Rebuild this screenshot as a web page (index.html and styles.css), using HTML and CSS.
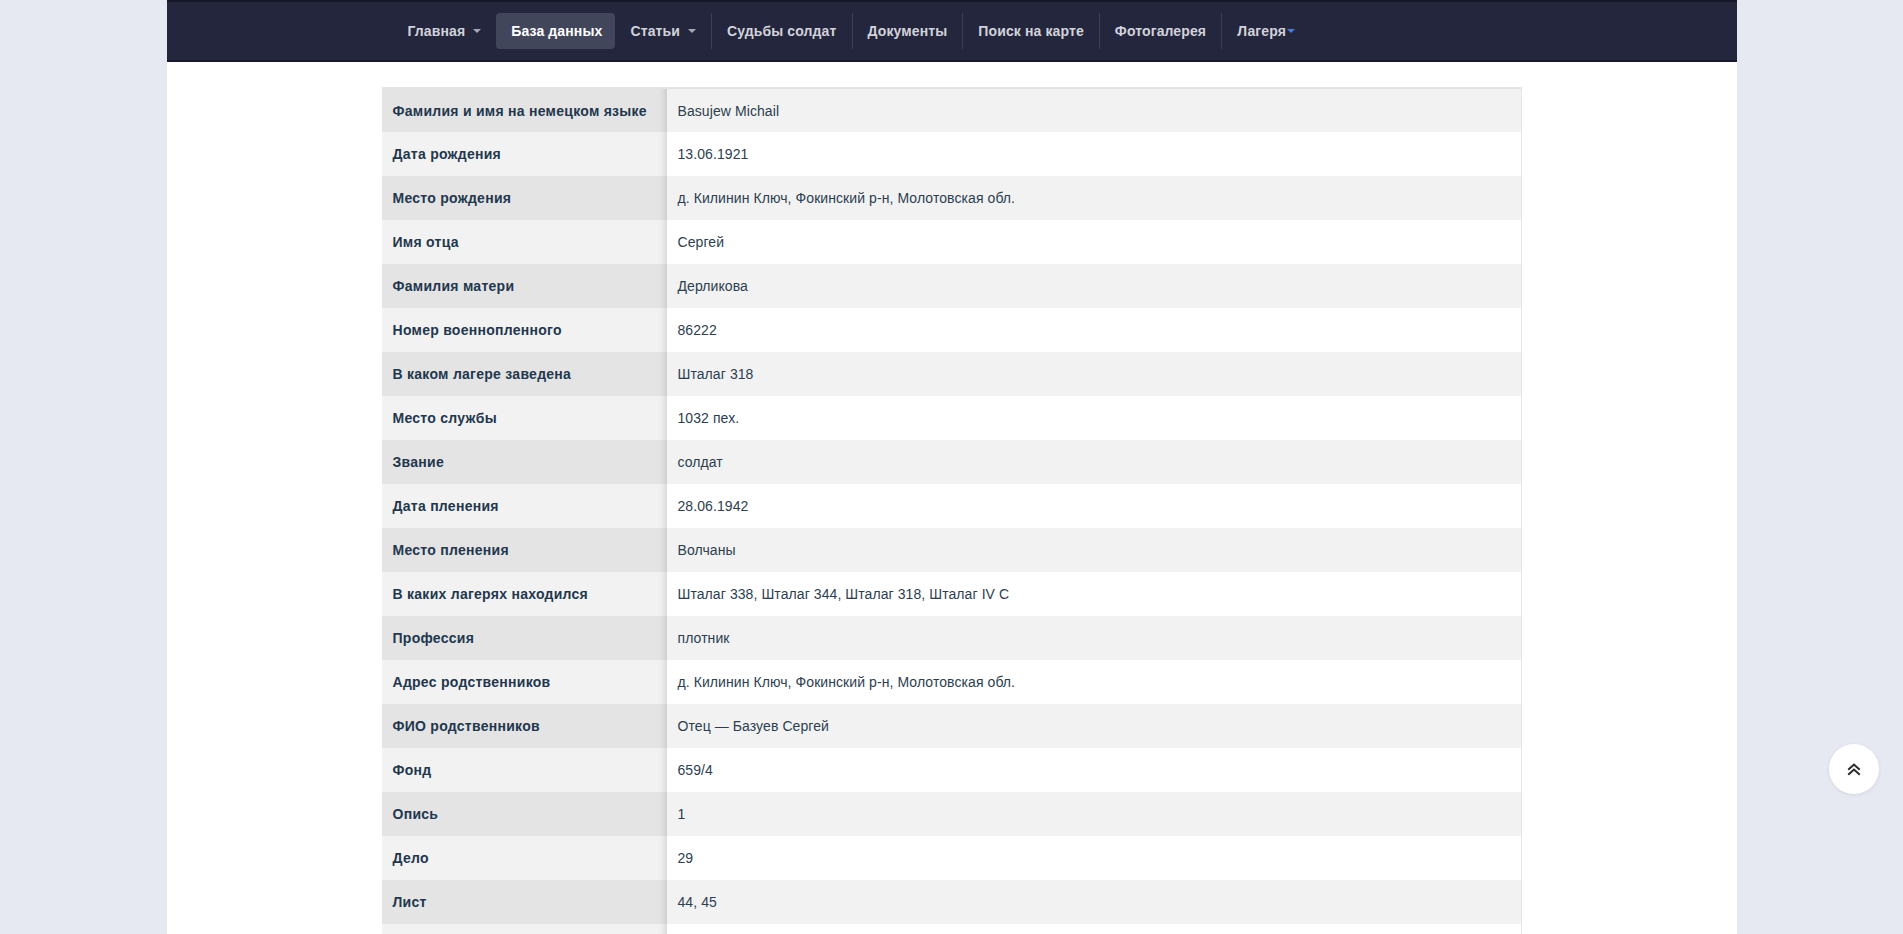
FILE: index.html
```html
<!DOCTYPE html>
<html lang="ru">
<head>
<meta charset="utf-8">
<title>Basujew Michail</title>
<link rel="stylesheet" href="styles.css">
</head>
<body>
<div class="page">
  <header class="navbar">
    <div class="nav-inner">
      <ul class="nav">
        <li class="nav-item"><a href="#">Главная <span class="caret"></span></a></li>
        <li class="nav-item active"><a href="#">База данных</a></li>
        <li class="nav-item"><a href="#">Статьи <span class="caret"></span></a></li>
        <li class="nav-item sep"><a href="#">Судьбы солдат</a></li>
        <li class="nav-item sep"><a href="#">Документы</a></li>
        <li class="nav-item sep"><a href="#">Поиск на карте</a></li>
        <li class="nav-item sep"><a href="#">Фотогалерея</a></li>
        <li class="nav-item sep"><a href="#">Лагеря<span class="caret blue"></span></a></li>
      </ul>
    </div>
  </header>
  <main class="content">
    <table class="info">
      <colgroup><col class="col-label"><col></colgroup>
      <tbody>
        <tr><th>Фамилия и имя на немецком языке</th><td>Basujew Michail</td></tr>
        <tr><th>Дата рождения</th><td>13.06.1921</td></tr>
        <tr><th>Место рождения</th><td>д. Килинин Ключ, Фокинский р-н, Молотовская обл.</td></tr>
        <tr><th>Имя отца</th><td>Сергей</td></tr>
        <tr><th>Фамилия матери</th><td>Дерликова</td></tr>
        <tr><th>Номер военнопленного</th><td>86222</td></tr>
        <tr><th>В каком лагере заведена</th><td>Шталаг 318</td></tr>
        <tr><th>Место службы</th><td>1032 пех.</td></tr>
        <tr><th>Звание</th><td>солдат</td></tr>
        <tr><th>Дата пленения</th><td>28.06.1942</td></tr>
        <tr><th>Место пленения</th><td>Волчаны</td></tr>
        <tr><th>В каких лагерях находился</th><td>Шталаг 338, Шталаг 344, Шталаг 318, Шталаг IV C</td></tr>
        <tr><th>Профессия</th><td>плотник</td></tr>
        <tr><th>Адрес родственников</th><td>д. Килинин Ключ, Фокинский р-н, Молотовская обл.</td></tr>
        <tr><th>ФИО родственников</th><td>Отец — Базуев Сергей</td></tr>
        <tr><th>Фонд</th><td>659/4</td></tr>
        <tr><th>Опись</th><td>1</td></tr>
        <tr><th>Дело</th><td>29</td></tr>
        <tr><th>Лист</th><td>44, 45</td></tr>
        <tr><th></th><td></td></tr>
      </tbody>
    </table>
  </main>
</div>
<a class="to-top" href="#" aria-label="Наверх">
  <svg width="16" height="16" viewBox="0 0 16 16" fill="none" stroke="#2b2b2b" stroke-width="2" stroke-linecap="square"><path d="M3 8 L8 3.5 L13 8"/><path d="M3 13 L8 8.5 L13 13"/></svg>
</a>
</body>
</html>
```
FILE: styles.css
```css
html, body {
  margin: 0;
  padding: 0;
}
body {
  background: #e6e9f2;
  font-family: "Liberation Sans", Arial, sans-serif;
  color: #263a4f;
}
.page {
  width: 1570px;
  margin: 0 auto;
  background: #fff;
  min-height: 100vh;
}
.navbar {
  height: 58px;
  background: #24263d;
  border-top: 2px solid #17192a;
  border-bottom: 2px solid #17192a;
  display: flex;
  align-items: center;
}
.nav-inner {
  width: 1140px;
  margin: 0 auto;
}
.nav {
  list-style: none;
  margin: 0;
  padding: 0 0 0 11px;
  display: flex;
  align-items: center;
}
.nav-item {
  height: 36px;
  display: flex;
  align-items: center;
}
.nav-item.sep {
  border-left: 1px solid #3d4055;
}
.nav-item a {
  display: flex;
  align-items: center;
  height: 36px;
  padding: 0 15px;
  color: #d2d3da;
  font-size: 14px;
  font-weight: bold;
  letter-spacing: 0.12px;
  text-decoration: none;
  border-radius: 4px;
  white-space: pre;
}
.nav-item.active a {
  background: #42465a;
  color: #fff;
  padding: 0 13px 0 15px;
}
.caret {
  display: inline-block;
  width: 0;
  height: 0;
  margin-left: 4px;
  border-left: 4px solid transparent;
  border-right: 4px solid transparent;
  border-top: 4px solid #a7a9b5;
}
.caret.blue {
  margin-left: 1px;
  border-top-color: #3f7fd6;
}
.content {
  width: 1140px;
  margin: 0 auto;
  padding-top: 25px;
}
.info {
  width: 100%;
  border-collapse: collapse;
  border-top: 2px solid #e3e3e3;
  border-right: 1px solid #e6e6e6;
  font-size: 14px;
}
.col-label {
  width: 285px;
}
.info th,
.info td {
  height: 44px;
  padding: 0 11px;
  text-align: left;
  vertical-align: middle;
  box-sizing: border-box;
}
.info th {
  font-weight: bold;
  letter-spacing: 0.27px;
  color: #22374d;
  background: #f2f2f2;
  box-shadow: inset -8px 0 7px -6px rgba(0, 0, 0, 0.13);
}
.info td {
  font-weight: normal;
  letter-spacing: 0.08px;
  color: #2c3e50;
  background: #fff;
}
.info tr:nth-child(odd) th {
  background: #e4e4e4;
}
.info tr:nth-child(odd) td {
  background: #f2f2f2;
}
.to-top {
  position: fixed;
  right: 24px;
  bottom: 140px;
  width: 50px;
  height: 50px;
  border-radius: 50%;
  background: #fff;
  box-shadow: 0 1px 4px rgba(0, 0, 0, 0.08);
  display: flex;
  align-items: center;
  justify-content: center;
}
```
